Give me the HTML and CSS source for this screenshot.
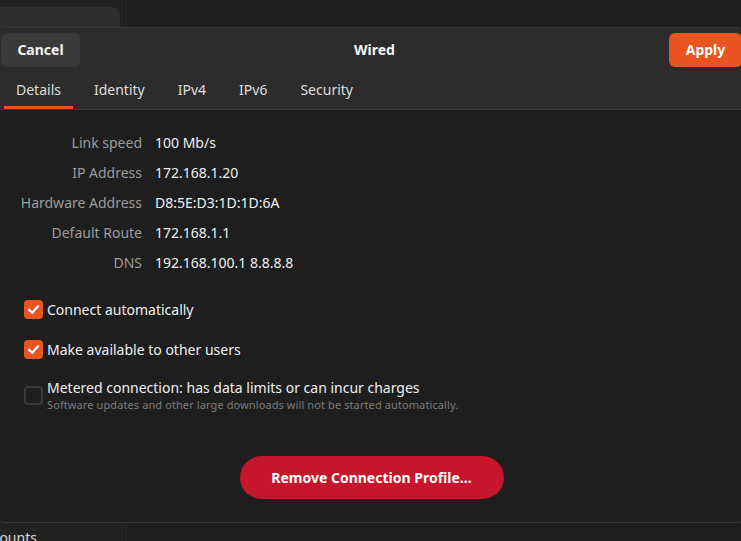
FILE: index.html
```html
<!DOCTYPE html>
<html>
<head>
<meta charset="utf-8">
<link rel="stylesheet" href="styles.css">
</head>
<body>
<div class="window">
  <aside class="sidebar">
    <div class="sidebar-card"></div>
    <div class="sidebar-spacer"></div>
    <div class="sidebar-item"><span>Online Accounts</span></div>
  </aside>
  <main class="main"></main>
</div>

<div class="dialog">
  <header class="dialog-header">
    <div class="header-row">
      <button class="btn btn-cancel">Cancel</button>
      <div class="title">Wired</div>
      <button class="btn btn-apply">Apply</button>
    </div>
    <nav class="tabs">
      <div class="tab active">Details</div>
      <div class="tab">Identity</div>
      <div class="tab">IPv4</div>
      <div class="tab">IPv6</div>
      <div class="tab">Security</div>
    </nav>
  </header>
  <section class="content">
    <div class="details">
      <div class="label">Link speed</div><div class="value">100 Mb/s</div>
      <div class="label">IP Address</div><div class="value">172.168.1.20</div>
      <div class="label">Hardware Address</div><div class="value">D8:5E:D3:1D:1D:6A</div>
      <div class="label">Default Route</div><div class="value">172.168.1.1</div>
      <div class="label">DNS</div><div class="value">192.168.100.1 8.8.8.8</div>
    </div>
    <div class="checks">
      <label class="check">
        <span class="box checked"><svg viewBox="0 0 20 20" width="19" height="19"><path d="M5.2 10.2 L8.6 13.4 L14.8 6.6" fill="none" stroke="#fff" stroke-width="2.4" stroke-linecap="round" stroke-linejoin="round"/></svg></span>
        <span class="check-text">Connect automatically</span>
      </label>
      <label class="check">
        <span class="box checked"><svg viewBox="0 0 20 20" width="19" height="19"><path d="M5.2 10.2 L8.6 13.4 L14.8 6.6" fill="none" stroke="#fff" stroke-width="2.4" stroke-linecap="round" stroke-linejoin="round"/></svg></span>
        <span class="check-text">Make available to other users</span>
      </label>
      <label class="check check-two">
        <span class="box"></span>
        <span class="check-lines">
          <span class="check-text">Metered connection: has data limits or can incur charges</span>
          <span class="check-sub">Software updates and other large downloads will not be started automatically.</span>
        </span>
      </label>
    </div>
    <div class="remove-row">
      <button class="btn-remove">Remove Connection Profile…</button>
    </div>
  </section>
</div>
</body>
</html>
```
FILE: styles.css
```css
* { box-sizing: border-box; }
html, body { margin: 0; padding: 0; }
body {
  width: 741px;
  height: 541px;
  overflow: hidden;
  background: #1e1e1e;
  font-family: "Noto Sans", "Open Sans", sans-serif;
  font-size: 14px;
  color: #f2f2f2;
  position: relative;
}
.window {
  display: flex;
  height: 541px;
}
.sidebar {
  width: 127px;
  background: #222222;
  border-right: 1px solid #2b2b2b;
  display: flex;
  flex-direction: column;
  overflow: hidden;
}
.sidebar-card {
  margin-top: 7px;
  width: 120px;
  height: 40px;
  background: #2f2f2f;
  border-radius: 0 8px 8px 0;
}
.sidebar-spacer { flex: 1; }
.sidebar-item {
  height: 18px;
  padding-top: 5px;
  white-space: nowrap;
  color: #dcdcdc;
  font-size: 14px;
  line-height: 20px;
  margin-left: -70px;
}
.main { flex: 1; background: #1e1e1e; }

.dialog {
  position: absolute;
  top: 27px;
  left: -5px;
  width: 753px;
  height: 496px;
  background: #1e1e1e;
  border: 1px solid #373737;
  border-radius: 10px;
  overflow: hidden;
  display: flex;
  flex-direction: column;
}
.dialog-header {
  background: #2c2c2c;
  border-bottom: 1px solid #3a3a3a;
}
.header-row {
  display: flex;
  align-items: center;
  justify-content: space-between;
  padding: 5px 5px 0 5px;
  height: 39px;
}
.btn {
  height: 34px;
  border: none;
  border-radius: 6px;
  font-family: inherit;
  font-size: 14px;
  font-weight: 700;
  color: #f4f4f4;
  padding: 0 0 2px 0;
}
.title { font-weight: 700; font-size: 14px; color: #f4f4f4; margin-top: -2px; }
.btn-cancel { width: 79px; background: #393939; }
.btn-apply { width: 73px; background: #e95420; color: #fff; }
.tabs {
  display: flex;
  gap: 9px;
  padding-left: 8px;
  height: 42px;
}
.tab {
  padding: 3px 12px 0 12px;
  line-height: 39px;
  color: #dedede;
  font-size: 14px;
  position: relative;
}
.tab.active::after {
  content: "";
  position: absolute;
  left: 0; right: 0; bottom: 0;
  height: 3px;
  background: #e95420;
}

.content {
  flex: 1;
  display: flex;
  flex-direction: column;
}
.details {
  display: grid;
  grid-template-columns: 146px auto;
  column-gap: 13px;
  padding-top: 17px;
  grid-auto-rows: 30px;
  align-items: center;
}
.label { text-align: right; color: #9c9c9c; }
.value { color: #f0f0f0; }

.checks {
  display: flex;
  flex-direction: column;
  padding-left: 28px;
  margin-top: 23px;
  gap: 21px;
}
.check {
  display: flex;
  align-items: center;
  gap: 4px;
  height: 19px;
}
.check-two { height: 38px; margin-top: -4px; }
.box {
  width: 19px;
  height: 19px;
  border-radius: 4px;
  flex: none;
  display: flex;
  border: 2px solid #3a3a3a;
}
.box.checked { background: #e95420; border: none; }
.check-text { color: #f0f0f0; font-size: 14px; }
.check-lines { display: flex; flex-direction: column; }
.check-lines .check-text { line-height: 19px; }
.check-sub { font-size: 11px; color: #7c7c7c; line-height: 15px; letter-spacing: 0.1px; }

.remove-row {
  display: flex;
  justify-content: center;
  margin-top: 42px;
}
.btn-remove {
  width: 264px;
  height: 43px;
  border: none;
  border-radius: 22px;
  background: #c7162b;
  color: #fff;
  font-family: inherit;
  font-size: 14px;
  font-weight: 700;
}
```
